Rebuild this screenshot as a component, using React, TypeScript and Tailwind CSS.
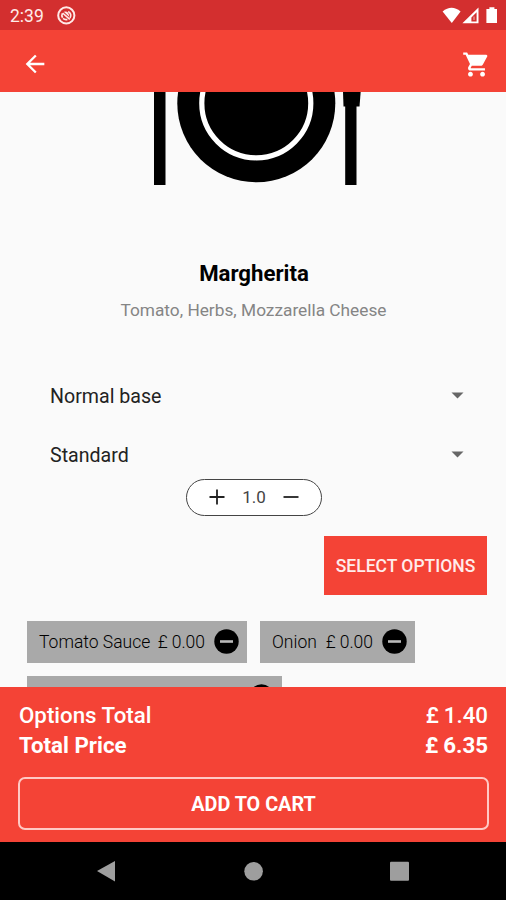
import type { ReactNode } from "react";

/* Status bar */

function StatusBar() {
  return (
    <div className="flex h-[30px] shrink-0 items-center bg-[#d32f2f] pl-[10px] pr-[8px] text-white">
      <span className="w-[47px] pt-[3px] text-[17.5px] leading-none text-[#ffecea]">2:39</span>
      <svg className="h-[19px] w-[19px]" viewBox="0 0 19 19" fill="none" stroke="#ffe9e7">
        <circle cx="9.3" cy="9.4" r="8.1" strokeWidth="2" />
        <path d="M5.6 11.8A4.4 4.4 0 0 1 5.4 7.4M11.2 5.4A4.5 4.5 0 0 1 13 12" strokeWidth="1.7" />
        <path d="M5.6 7L12.8 13.4M6 12.4A4.5 4.5 0 0 0 10.4 13.4" strokeWidth="1.6" />
        <path d="M6.8 5.8Q11.8 4.6 12.2 10.8Z" fill="#ffe9e7" stroke="none" />
      </svg>
      <svg className="ml-auto h-[18px] w-[57px]" viewBox="0 0 57 18" fill="#fff">
        <path d="M1.6 5.5Q10.5 -2 19.6 5.5L10.8 17Z" />
        <path fillRule="evenodd" d="M37.5 1.5V17.3H21.4ZM35.6 6.2L30.4 11.5V15.4H35.6Z" />
        <path d="M32.2 10.6H33.8V14H32.2Z" fillOpacity="0.4" />
        <path d="M48.4 1.2H53.4V3H56V17H45.4V3H48.4Z" />
      </svg>
    </div>
  );
}

function AppBar() {
  return (
    <header className="flex h-[61.5px] shrink-0 items-center justify-between bg-[#f44336] pl-[21px] pr-[15px] pt-[7px]">
      <svg className="h-[28px] w-[28px]" viewBox="0 0 24 24" fill="#fff">
        <path d="M20 11H7.83l5.59-5.59L12 4l-8 8 8 8 1.41-1.41L7.83 13H20v-2z" />
      </svg>
      <svg className="h-[29px] w-[29px]" viewBox="0 0 24 24" fill="#fff">
        <path d="M7 18c-1.1 0-1.99.9-1.99 2S5.9 22 7 22s2-.9 2-2-.9-2-2-2zM1 2v2h2l3.6 7.59-1.35 2.45c-.16.28-.25.61-.25.96 0 1.1.9 2 2 2h12v-2H7.42c-.14 0-.25-.11-.25-.25l.03-.12.9-1.63h7.45c.75 0 1.41-.41 1.75-1.03l3.58-6.49A1 1 0 0 0 20 4H5.21l-.94-2H1zm16 16c-1.1 0-1.99.9-1.99 2s.89 2 1.99 2 2-.9 2-2-.9-2-2-2z" />
      </svg>
    </header>
  );
}

/* Product */

function PlateImage() {
  return (
    <svg className="ml-[130px] h-[94px] w-[250px] shrink-0" viewBox="130 91.5 250 94">
      <path d="M154 91h11.5v93.5H154zM345.2 91h11.3v93.5H345.2z" />
      <path d="M343 91H360.7L359.5 106H343.5Z" />
      <circle cx="256.3" cy="102.8" r="79" />
      <circle cx="256.3" cy="102.8" r="54.5" fill="none" stroke="#fff" strokeWidth="5.2" />
    </svg>
  );
}

function Dropdown({ children }: { children: ReactNode }) {
  return (
    <div className="flex h-[59px] items-center justify-between pl-[50px] pr-[42px]">
      <span className="pt-[3px] text-[19.6px] leading-none text-[#222]">{children}</span>
      <svg className="h-[7px] w-[13px]" viewBox="0 0 13 7" fill="#666">
        <path d="M0.5 0.5H12.5L6.5 6.5Z" />
      </svg>
    </div>
  );
}

function Stepper() {
  return (
    <div className="ml-[186px] flex h-[37px] w-[136px] shrink-0 items-center justify-between rounded-full border-[1.5px] border-[#444] bg-white pl-[22px] pr-[22px]">
      <svg className="h-[16px] w-[16px]" viewBox="0 0 16 16" stroke="#222" strokeWidth="1.8">
        <path d="M0.5 8H15.5M8 0.5V15.5" />
      </svg>
      <span className="pt-px text-[17px] leading-none text-[#444]">1.0</span>
      <svg className="h-[16px] w-[16px]" viewBox="0 0 16 16" stroke="#222" strokeWidth="1.8">
        <path d="M0.5 8H15.5" />
      </svg>
    </div>
  );
}

function RemoveIcon() {
  return (
    <svg className="h-[25px] w-[25px]" viewBox="0 0 25 25">
      <circle cx="12.5" cy="12.5" r="12.2" />
      <path d="M6 12.5H19" stroke="#bbb" strokeWidth="2.6" />
    </svg>
  );
}

function Chip({ label, price, className }: { label: string; price: string; className: string }) {
  return (
    <div className={`flex h-[42px] items-center bg-[#a9a9a9] pl-[12px] pr-[8px] text-[17.5px] font-light text-black ${className}`}>
      <span className="pt-[2px]">{label}</span>
      <span className="ml-auto pt-[2px]">£</span>
      <span className="ml-[4px] mr-[9px] pt-[2px]">{price}</span>
      <RemoveIcon />
    </div>
  );
}

/* Footer */

function TotalRow({ label, price, className }: { label: string; price: string; className: string }) {
  return (
    <div className={`flex h-[30px] items-center text-[22.3px] leading-none ${className}`}>
      <span>{label}</span>
      <span className="ml-auto mr-[5px]">£</span>
      <span>{price}</span>
    </div>
  );
}

function Footer() {
  return (
    <footer className="h-[155px] shrink-0 bg-[#f44336] px-[18px] pt-[13px] text-white">
      <div className="pl-px">
        <TotalRow label="Options Total" price="1.40" className="font-medium" />
        <TotalRow label="Total Price" price="6.35" className="font-bold" />
      </div>
      <button className="mt-[17px] flex h-[53px] w-[471px] items-center justify-center rounded-[7px] border-2 border-[#ffc9c4] pt-[2px] text-[19.8px] font-bold">
        ADD TO CART
      </button>
    </footer>
  );
}

function NavBar() {
  return (
    <nav className="flex h-[58px] shrink-0 items-center bg-black pl-[97px]">
      <svg className="h-[21px] w-[314px]" viewBox="97 860.5 314 21" fill="#9e9e9e">
        <path d="M97 870.5L115 860.5V881Z" />
        <circle cx="253.6" cy="870.8" r="9.3" />
        <rect x="390" y="861.3" width="19" height="19" rx="1" />
      </svg>
    </nav>
  );
}

export default function App() {
  return (
    <div className="flex h-[900px] w-[506px] flex-col overflow-hidden bg-[#fafafa] font-[Roboto,sans-serif]">
      <StatusBar />
      <AppBar />
      <main className="flex min-h-0 flex-1 flex-col overflow-hidden">
        <PlateImage />
        <h1 className="mt-[74.5px] h-[26px] shrink-0 pl-[2px] text-center text-[22.2px] font-bold leading-[26px] text-black">
          Margherita
        </h1>
        <p className="mt-[13.5px] h-[20px] shrink-0 pl-px text-center text-[17.3px] leading-[20px] text-[#858585]">
          Tomato, Herbs, Mozzarella Cheese
        </p>
        <div className="mt-[46px] shrink-0">
          <Dropdown>Normal base</Dropdown>
          <Dropdown>Standard</Dropdown>
        </div>
        <div className="-mt-[5px] shrink-0">
          <Stepper />
        </div>
        <button className="ml-auto mr-[19px] mt-[20px] h-[59px] w-[163px] shrink-0 bg-[#f44336] pt-[2px] text-[17.5px] font-medium text-[#ffeceb]">
          SELECT OPTIONS
        </button>
        <div className="ml-[27px] mt-[26px] flex shrink-0 flex-wrap gap-[13px]">
          <Chip label="Tomato Sauce" price="0.00" className="w-[220px]" />
          <Chip label="Onion" price="0.00" className="w-[155px]" />
          <div className="flex h-[42px] w-[255px] items-center justify-end bg-[#a9a9a9] pr-[8px]">
            <RemoveIcon />
          </div>
        </div>
      </main>
      <Footer />
      <NavBar />
    </div>
  );
}
